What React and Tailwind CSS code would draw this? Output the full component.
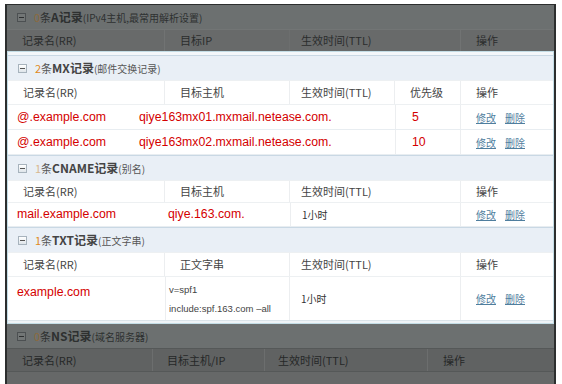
import React from 'react';

const cjk = { fontFamily: '"Noto Sans CJK SC", "Liberation Sans", sans-serif' };
const arial = { fontFamily: '"Liberation Sans", Arial, "Noto Sans CJK SC", sans-serif' };

// 折叠按钮
const MinusBox = ({ dark }) => (
  <span
    className={
      dark
        ? 'w-[9px] h-[9px] border border-[#4c5052] bg-[#727676] flex items-center justify-center'
        : 'w-[9px] h-[9px] border border-[#a7b3bd] bg-gradient-to-b from-white to-[#dfe5ea] flex items-center justify-center'
    }
  >
    <span className={dark ? 'w-[5px] h-px bg-[#2d2f30]' : 'w-[5px] h-px bg-[#555]'} />
  </span>
);

// 分组标题
const SectionTitle = ({ count, type, desc, dark, countClass }) => (
  <div
    className={
      dark
        ? 'h-[24px] flex items-center pl-[10px] gap-[8px] bg-[#6c7070]'
        : 'h-[25px] flex items-center pl-[10px] gap-[8px] bg-[#e9eff6] border-t border-[#c9d8e4]'
    }
    style={cjk}
  >
    <MinusBox dark={dark} />
    <span className="flex items-baseline">
      <span className={countClass || (dark ? 'text-[11px] text-[#8c6a3c]' : 'text-[11px] text-[#e08a1e]')}>{count}</span>
      <span className={dark ? 'text-[11px] text-[#2e3030]' : 'text-[11px] text-[#555]'}>条</span>
      <span className={dark ? 'text-[12px] font-bold text-[#2e3030]' : 'text-[12px] font-bold text-[#444]'}>{type}记录</span>
      <span className={dark ? 'text-[10px] text-[#2e3030]' : 'text-[10px] text-[#555]'}>({desc})</span>
    </span>
  </div>
);

const Links = () => (
  <span className="flex gap-[9px] text-[10px] text-[#4f7e9e] underline" style={cjk}>
    <span>修改</span>
    <span>删除</span>
  </span>
);

const red = 'text-[12.3px] text-[#d40000]';

const App = () => {
  return (
    <div className="w-[562px] h-[384px] bg-white pl-[5px] pt-[4px] overflow-hidden">
      <div className="w-[551px] h-[384px] border-l-2 border-r-2 border-t border-[#2c2e2e] bg-[#646767] flex flex-col">
        {/* 上方遮罩：A记录 */}
        <SectionTitle count="0" type="A" desc="IPv4主机,最常用解析设置" dark />
        <div
          className="h-[22px] grid grid-cols-[158px_125px_171px_1fr] bg-[#686a6a] border-t border-[#727575] text-[11px] text-[#2b2d2d]"
          style={cjk}
        >
          <div className="pl-[15px] flex items-center border-r border-[#717373]">记录名(RR)</div>
          <div className="pl-[15px] flex items-center border-r border-[#6c6e6e]">目标IP</div>
          <div className="pl-[11px] flex items-center border-r border-[#717373]">生效时间(TTL)</div>
          <div className="pl-[15px] flex items-center">操作</div>
        </div>

        {/* 高亮区域 */}
        <div className="border border-[#c3dde6] bg-white flex flex-col">
          {/* MX */}
          <div className="h-[3px] bg-[#f4f7fa]" />
          <SectionTitle count="2" type="MX" desc="邮件交换记录" />
          <div
            className="h-[25px] grid grid-cols-[157px_125px_105px_66px_1fr] text-[11px] text-[#444] border-t border-[#e3e9ee] border-b border-[#edf0f2]"
            style={cjk}
          >
            <div className="pl-[15px] flex items-center border-r border-[#eceef0]">记录名(RR)</div>
            <div className="pl-[15px] flex items-center border-r border-[#eceef0]">目标主机</div>
            <div className="pl-[11px] flex items-center border-r border-[#eceef0]">生效时间(TTL)</div>
            <div className="pl-[15px] flex items-center border-r border-[#eceef0]">优先级</div>
            <div className="pl-[15px] flex items-center">操作</div>
          </div>
          {[
            ['@.example.com', 'qiye163mx01.mxmail.netease.com.', '5'],
            ['@.example.com', 'qiye163mx02.mxmail.netease.com.', '10'],
          ].map(([rr, host, pri], i) => (
            <div
              key={i}
              className="h-[25px] grid grid-cols-[387px_66px_1fr] border-b border-[#e8edf1]"
              style={arial}
            >
              <div className={`flex items-center pl-[9px] gap-[33px] ${red}`}>
                <span>{rr}</span>
                <span>{host}</span>
              </div>
              <div className={`flex items-center pl-[16px] border-l border-r border-[#eceef0] ${red}`}>
                {pri}
              </div>
              <div className="flex items-center pl-[15px]">
                <Links />
              </div>
            </div>
          ))}

          {/* CNAME */}
          <SectionTitle count="1" type="CNAME" desc="别名" countClass="text-[11px] text-[#d8b890]" />
          <div
            className="h-[23px] grid grid-cols-[157px_125px_171px_1fr] text-[11px] text-[#444] border-t border-[#e3e9ee] border-b border-[#edf0f2]"
            style={cjk}
          >
            <div className="pl-[15px] flex items-center border-r border-[#eceef0]">记录名(RR)</div>
            <div className="pl-[15px] flex items-center border-r border-[#eceef0]">目标主机</div>
            <div className="pl-[11px] flex items-center border-r border-[#eceef0]">生效时间(TTL)</div>
            <div className="pl-[15px] flex items-center">操作</div>
          </div>
          <div className="h-[24px] grid grid-cols-[157px_125px_171px_1fr] border-b border-[#e8edf1]">
            <div className={`pl-[9px] flex items-center ${red}`} style={arial}>mail.example.com</div>
            <div className={`pl-[3px] flex items-center ${red}`} style={arial}>qiye.163.com.</div>
            <div className="pl-[11px] flex items-center text-[10px] text-[#333] border-l border-r border-[#eceef0]" style={cjk}>1小时</div>
            <div className="pl-[15px] flex items-center"><Links /></div>
          </div>

          {/* TXT */}
          <SectionTitle count="1" type="TXT" desc="正文字串" />
          <div
            className="h-[25px] grid grid-cols-[157px_125px_171px_1fr] text-[11px] text-[#444] border-t border-[#e3e9ee] border-b border-[#edf0f2]"
            style={cjk}
          >
            <div className="pl-[15px] flex items-center border-r border-[#eceef0]">记录名(RR)</div>
            <div className="pl-[15px] flex items-center border-r border-[#eceef0]">正文字串</div>
            <div className="pl-[11px] flex items-center border-r border-[#eceef0]">生效时间(TTL)</div>
            <div className="pl-[15px] flex items-center">操作</div>
          </div>
          <div className="h-[44px] grid grid-cols-[157px_125px_171px_1fr] border-b border-[#dbe4ea]">
            <div className={`pl-[9px] pt-[6px] ${red}`} style={arial}>example.com</div>
            <div className="pl-[3px] pt-[6px] flex flex-col gap-[5px] text-[9.5px] text-[#444] border-l border-r border-[#eceef0]" style={arial}>
              <span>v=spf1</span>
              <span>include:spf.163.com –all</span>
            </div>
            <div className="pl-[11px] flex items-center text-[10px] text-[#333] border-r border-[#eceef0]" style={cjk}>1小时</div>
            <div className="pl-[15px] flex items-center"><Links /></div>
          </div>
          <div className="h-[2px] bg-[#eef3f6]" />
        </div>

        {/* 下方遮罩：NS记录 */}
        <SectionTitle count="0" type="NS" desc="域名服务器" dark />
        <div
          className="h-[24px] grid grid-cols-[146px_112px_163px_1fr] bg-[#606262] border-t border-[#6a6d6d] border-b border-[#555858] text-[11px] text-[#262828]"
          style={cjk}
        >
          <div className="pl-[15px] flex items-center border-r border-[#6c6e6e]">记录名(RR)</div>
          <div className="pl-[14px] flex items-center border-r border-[#6c6e6e]">目标主机/IP</div>
          <div className="pl-[13px] flex items-center border-r border-[#6c6e6e]">生效时间(TTL)</div>
          <div className="pl-[15px] flex items-center">操作</div>
        </div>
        <div className="flex-1 bg-[#666868]" />
      </div>
    </div>
  );
};

export default App;
